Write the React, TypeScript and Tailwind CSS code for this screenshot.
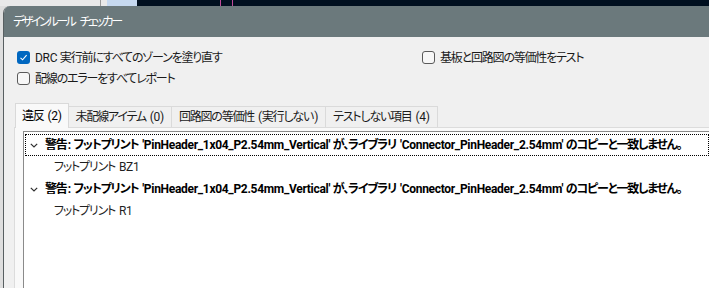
const font = "font-['Roboto','Noto_Sans_CJK_JP',sans-serif] [font-feature-settings:'palt']";

const warning =
  "警告: フットプリント 'PinHeader_1x04_P2.54mm_Vertical' が、ライブラリ 'Connector_PinHeader_2.54mm' のコピーと一致しません。";

// right padding gives back the spacing taken after the last glyph of the run.
function JP({ text, tight }: { text: string; tight?: boolean }) {
  const parts = text.split(/([\u3000-\u30ff\u4e00-\u9fff\uff00-\uffef]+)/);
  return (
    <span>
      {parts.map((p, i) =>
        i % 2 === 1 ? (
          <span key={i} className={tight ? 'tracking-[-2.4px] pr-[2.4px]' : 'tracking-[-1.2px] pr-[1.2px]'}>
            {p}
          </span>
        ) : (
          <span key={i} className="tracking-[-0.3px]">
            {p}
          </span>
        )
      )}
    </span>
  );
}

function CheckBox({ checked, label }: { checked?: boolean; label: string }) {
  return (
    <label className="flex items-center h-[21px] gap-[5px] text-[12px] text-[#1a1a1a] whitespace-nowrap">
      {checked ? (
        <span className="w-[13px] h-[13px] shrink-0 rounded-[3px] bg-[#0067c0] flex items-center justify-center">
          <svg width="9" height="9" viewBox="0 0 9 9">
            <path d="M1.5 4.8 L3.6 6.8 L7.6 2.2" fill="none" stroke="white" strokeWidth="1.1" />
          </svg>
        </span>
      ) : (
        <span className="w-[13px] h-[13px] shrink-0 rounded-[3px] border border-[#5a5a5a] bg-[#f7f7f7]" />
      )}
      <JP text={label} />
    </label>
  );
}

const tabs = ['違反 (2)', '未配線アイテム (0)', '回路図の等価性 (実行しない)', 'テストしない項目 (4)'];

function TreeRow({ child, focused, text }: { child?: boolean; focused?: boolean; text: string }) {
  return (
    <div
      className={`flex items-center h-[22px] whitespace-nowrap text-[12px] ${
        focused ? 'border border-dotted border-black' : 'border border-transparent'
      }`}
    >
      {child ? (
        <span className="pl-[28px] text-[#1f1f1f]">
          <JP text={text} />
        </span>
      ) : (
        <>
          <svg className="ml-[4px] shrink-0" width="8" height="5" viewBox="0 0 8 5">
            <path d="M0.8 0.8 L4 4 L7.2 0.8" fill="none" stroke="#333" strokeWidth="1.2" />
          </svg>
          <span className="ml-[7px] font-bold text-black">
            <JP text={text} />
          </span>
        </>
      )}
    </div>
  );
}

export default function App() {
  return (
    <div className={`w-[709px] h-[288px] overflow-hidden bg-[#dedede] ${font}`}>
      {/* background app strip */}
      <div className="flex h-[6px]">
        <div className="w-[100px] bg-[#e9e9e9]" />
        <div className="w-px bg-[#9a9a9a]" />
        <div className="w-[6px] bg-[#e9e9e9]" />
        <div className="w-[30px] bg-[#c6d9f0]" />
        <div className="flex-1 bg-[#000f1f] flex">
          <div className="ml-[83px] w-px bg-[#c04a9a]" />
          <div className="ml-[11px] w-px bg-[#c04a9a]" />
        </div>
      </div>

      {/* dialog */}
      <div className="ml-[3px] h-[282px] rounded-tl-[7px] overflow-hidden border-l border-[#585f61] bg-[#f0f0f0] flex flex-col">
        <div className="h-[31px] shrink-0 bg-[#6b797c] text-white text-[12px] pl-[9px] flex items-center whitespace-nowrap">
          <JP text="デザインルール チェッカー" tight />
        </div>

        <div className="flex mt-[10px] pl-[13px]">
          <div className="w-[405px]">
            <CheckBox checked label="DRC 実行前にすべてのゾーンを塗り直す" />
            <CheckBox label="配線のエラーをすべてレポート" />
          </div>
          <div>
            <CheckBox label="基板と回路図の等価性をテスト" />
          </div>
        </div>

        {/* tabs */}
        <div className="mt-[14px] ml-[10px] flex flex-col flex-1">
          <div className="flex items-end h-[24px] pl-px">
            {tabs.map((t, i) =>
              i === 0 ? (
                <div
                  key={t}
                  className="h-[25px] -mb-px relative z-10 px-[6px] flex items-center text-[12px] text-black bg-[#f9f9f9] border border-b-0 border-[#d9d9d9] whitespace-nowrap"
                >
                  <JP text={t} />
                </div>
              ) : (
                <div
                  key={t}
                  className="h-[21px] px-[7px] flex items-center text-[12px] text-[#1a1a1a] bg-[#f0f0f0] border border-b-0 border-l-0 border-[#dadada] whitespace-nowrap"
                >
                  <JP text={t} />
                </div>
              )
            )}
          </div>
          <div className="flex-1 bg-[#f9f9f9] border-t border-l border-[#dcdcdc] pl-[8px] pt-[3px]">
            <div className="h-full bg-white border-t border-l border-[#8a8a8a] pt-[2px] pl-px">
              <TreeRow focused text={warning} />
              <TreeRow child text="フットプリント BZ1" />
              <TreeRow text={warning} />
              <TreeRow child text="フットプリント R1" />
            </div>
          </div>
        </div>
      </div>
    </div>
  );
}
